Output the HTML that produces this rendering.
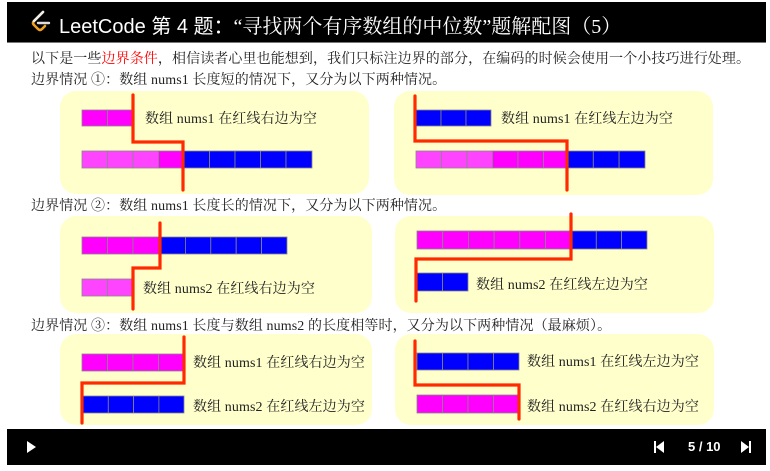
<!DOCTYPE html>
<html><head><meta charset="utf-8"><style>
body{margin:0;width:770px;height:471px;background:#fff;position:relative;overflow:hidden;font-family:"Liberation Serif","Noto Serif CJK SC",serif;}
.t{position:absolute;font-size:14px;letter-spacing:0.1px;color:#222;white-space:nowrap;line-height:16px;margin-top:2px}
.hd{position:absolute;left:7px;top:2px;width:759px;height:40px;background:#000;border-bottom:1px solid #777}
.ht{position:absolute;left:52px;top:8px;color:#fff;font-size:20px;font-family:"Liberation Sans","Noto Sans CJK SC",sans-serif;white-space:nowrap}
.bb{position:absolute;left:7px;top:429px;width:759px;height:36px;background:#000}
</style></head><body>
<div class="hd">
<svg style="position:absolute;left:22px;top:8px" width="24" height="24" viewBox="0 0 24 24">
<path d="M14 2 L5 11 Q3 13 5 15 L9 19 Q11 21 13 19 L16 16" fill="none" stroke="#f0a020" stroke-width="2.6" stroke-linecap="round"/>
<path d="M9 13 H20" stroke="#ddd" stroke-width="2.4" stroke-linecap="round"/>
<path d="M14 2 L5 11" stroke="#eee" stroke-width="2.6" stroke-linecap="round"/>
</svg>
<div class="ht">LeetCode 第 4 题：<span style="font-family:'Liberation Serif','Noto Serif CJK SC',serif">“寻找两个有序数组的中位数”题解配图（5）</span></div>
</div>
<div class="t" style="left:31px;top:50px">以下是一些<span style="color:#f00">边界条件</span>，相信读者心里也能想到，我们只标注边界的部分，在编码的时候会使用一个小技巧进行处理。</div>
<div class="t" style="left:31px;top:71px">边界情况 ①：数组 nums1 长度短的情况下，又分为以下两种情况。</div>
<div class="t" style="left:31px;top:197px">边界情况 ②：数组 nums1 长度长的情况下，又分为以下两种情况。</div>
<div class="t" style="left:31px;top:317px">边界情况 ③：数组 nums1 长度与数组 nums2 的长度相等时，又分为以下两种情况（最麻烦）。</div>

<svg style="position:absolute;left:0;top:0" width="770" height="471">
<g fill="#ffffcc">
<rect x="60" y="91" width="309" height="103" rx="16"/>
<rect x="394" y="91" width="319" height="104" rx="16"/>
<rect x="60" y="216" width="312" height="97" rx="16"/>
<rect x="395" y="216" width="319" height="97" rx="16"/>
<rect x="60" y="334" width="312" height="91" rx="16"/>
<rect x="395" y="334" width="319" height="91" rx="16"/>
</g>
<g stroke="#888" stroke-width="0.8">
<rect x="82" y="110" width="25.5" height="16" fill="#ff00ff"/><rect x="107.5" y="110" width="25.5" height="16" fill="#ff00ff"/>
<rect x="82" y="151" width="25.5" height="17" fill="#ff44ff"/><rect x="107.5" y="151" width="25.5" height="17" fill="#ff44ff"/><rect x="133" y="151" width="25.5" height="17" fill="#ff44ff"/><rect x="158.5" y="151" width="25.5" height="17" fill="#ff00ff"/>
<rect x="184" y="151" width="25.5" height="17" fill="#0000ff"/><rect x="209.5" y="151" width="25.5" height="17" fill="#0000ff"/><rect x="235" y="151" width="25.5" height="17" fill="#0000ff"/><rect x="260.5" y="151" width="25.5" height="17" fill="#0000ff"/><rect x="286" y="151" width="26" height="17" fill="#0000ff"/>
<rect x="416" y="110" width="25" height="16" fill="#0000ff"/><rect x="441" y="110" width="25" height="16" fill="#0000ff"/><rect x="466" y="110" width="25" height="16" fill="#0000ff"/>
<rect x="416" y="151" width="25.5" height="17" fill="#ff44ff"/><rect x="441.5" y="151" width="25.5" height="17" fill="#ff44ff"/><rect x="467" y="151" width="25.5" height="17" fill="#ff44ff"/><rect x="492.5" y="151" width="25.5" height="17" fill="#ff00ff"/><rect x="518" y="151" width="25.5" height="17" fill="#ff00ff"/><rect x="543.5" y="151" width="24" height="17" fill="#ff00ff"/>
<rect x="567.5" y="151" width="25.8" height="17" fill="#0000ff"/><rect x="593.3" y="151" width="25.8" height="17" fill="#0000ff"/><rect x="619.1" y="151" width="25.9" height="17" fill="#0000ff"/>
<rect x="82" y="237" width="25.5" height="17" fill="#ff00ff"/><rect x="107.5" y="237" width="25.5" height="17" fill="#ff00ff"/><rect x="133" y="237" width="27" height="17" fill="#ff00ff"/>
<rect x="160" y="237" width="25.4" height="17" fill="#0000ff"/><rect x="185.4" y="237" width="25.4" height="17" fill="#0000ff"/><rect x="210.8" y="237" width="25.4" height="17" fill="#0000ff"/><rect x="236.2" y="237" width="25.4" height="17" fill="#0000ff"/><rect x="261.6" y="237" width="25.4" height="17" fill="#0000ff"/>
<rect x="82" y="279" width="25.5" height="17" fill="#ff44ff"/><rect x="107.5" y="279" width="25.5" height="17" fill="#ff44ff"/>
<rect x="417" y="231" width="25.7" height="18" fill="#ff00ff"/><rect x="442.7" y="231" width="25.7" height="18" fill="#ff00ff"/><rect x="468.4" y="231" width="25.7" height="18" fill="#ff00ff"/><rect x="494.1" y="231" width="25.7" height="18" fill="#ff00ff"/><rect x="519.8" y="231" width="25.7" height="18" fill="#ff00ff"/><rect x="545.5" y="231" width="25.5" height="18" fill="#ff00ff"/>
<rect x="571" y="231" width="25.3" height="18" fill="#0000ff"/><rect x="596.3" y="231" width="25.3" height="18" fill="#0000ff"/><rect x="621.6" y="231" width="25.4" height="18" fill="#0000ff"/>
<rect x="417" y="273" width="25.5" height="18" fill="#0000ff"/><rect x="442.5" y="273" width="25.5" height="18" fill="#0000ff"/>
<rect x="82" y="354" width="25.5" height="17" fill="#ff00ff"/><rect x="107.5" y="354" width="25.5" height="17" fill="#ff00ff"/><rect x="133" y="354" width="25.5" height="17" fill="#ff00ff"/><rect x="158.5" y="354" width="25.5" height="17" fill="#ff00ff"/>
<rect x="83" y="396" width="25.3" height="17" fill="#0000ff"/><rect x="108.3" y="396" width="25.3" height="17" fill="#0000ff"/><rect x="133.6" y="396" width="25.3" height="17" fill="#0000ff"/><rect x="158.9" y="396" width="25.1" height="17" fill="#0000ff"/>
<rect x="417" y="353" width="25.5" height="17" fill="#0000ff"/><rect x="442.5" y="353" width="25.5" height="17" fill="#0000ff"/><rect x="468" y="353" width="25.5" height="17" fill="#0000ff"/><rect x="493.5" y="353" width="25.5" height="17" fill="#0000ff"/>
<rect x="417" y="395" width="25.5" height="18" fill="#ff00ff"/><rect x="442.5" y="395" width="25.5" height="18" fill="#ff00ff"/><rect x="468" y="395" width="25.5" height="18" fill="#ff00ff"/><rect x="493.5" y="395" width="25.5" height="18" fill="#ff00ff"/>
</g>
<g fill="none" stroke="#ff2a00" stroke-width="3.2" stroke-linecap="round">
<path d="M133 95 V142 H183 V190"/>
<path d="M415 96 V141 H567 V190"/>
<path d="M160 223 V268 H133 V309"/>
<path d="M571 214 V259 H416 V301"/>
<path d="M184 337 V383 H82 V423"/>
<path d="M415 341 V385 H519 V419"/>
</g>
</svg>
<div class="t" style="left:145px;top:110px">数组 nums1 在红线右边为空</div>
<div class="t" style="left:501px;top:110px">数组 nums1 在红线左边为空</div>
<div class="t" style="left:143px;top:280px">数组 nums2 在红线右边为空</div>
<div class="t" style="left:476px;top:276px">数组 nums2 在红线左边为空</div>
<div class="t" style="left:193px;top:354px">数组 nums1 在红线右边为空</div>
<div class="t" style="left:193px;top:398px">数组 nums2 在红线左边为空</div>
<div class="t" style="left:527px;top:353px">数组 nums1 在红线左边为空</div>
<div class="t" style="left:527px;top:398px">数组 nums2 在红线右边为空</div>

<div class="bb">
<svg style="position:absolute;left:16px;top:11px" width="14" height="14"><path d="M4 1 L13 7 L4 13Z" fill="#fff"/></svg>
<svg style="position:absolute;left:645px;top:11px" width="14" height="14"><rect x="2" y="1" width="2" height="12" fill="#fff"/><path d="M12 1 V13 L4 7Z" fill="#fff"/></svg>
<div style="position:absolute;left:681px;top:10px;color:#fff;font:bold 13px 'Liberation Sans',sans-serif">5 / 10</div>
<svg style="position:absolute;left:732px;top:11px" width="14" height="14"><path d="M2 1 L10 7 L2 13Z" fill="#fff"/><rect x="10" y="1" width="2" height="12" fill="#fff"/></svg>
</div>
</body></html>
